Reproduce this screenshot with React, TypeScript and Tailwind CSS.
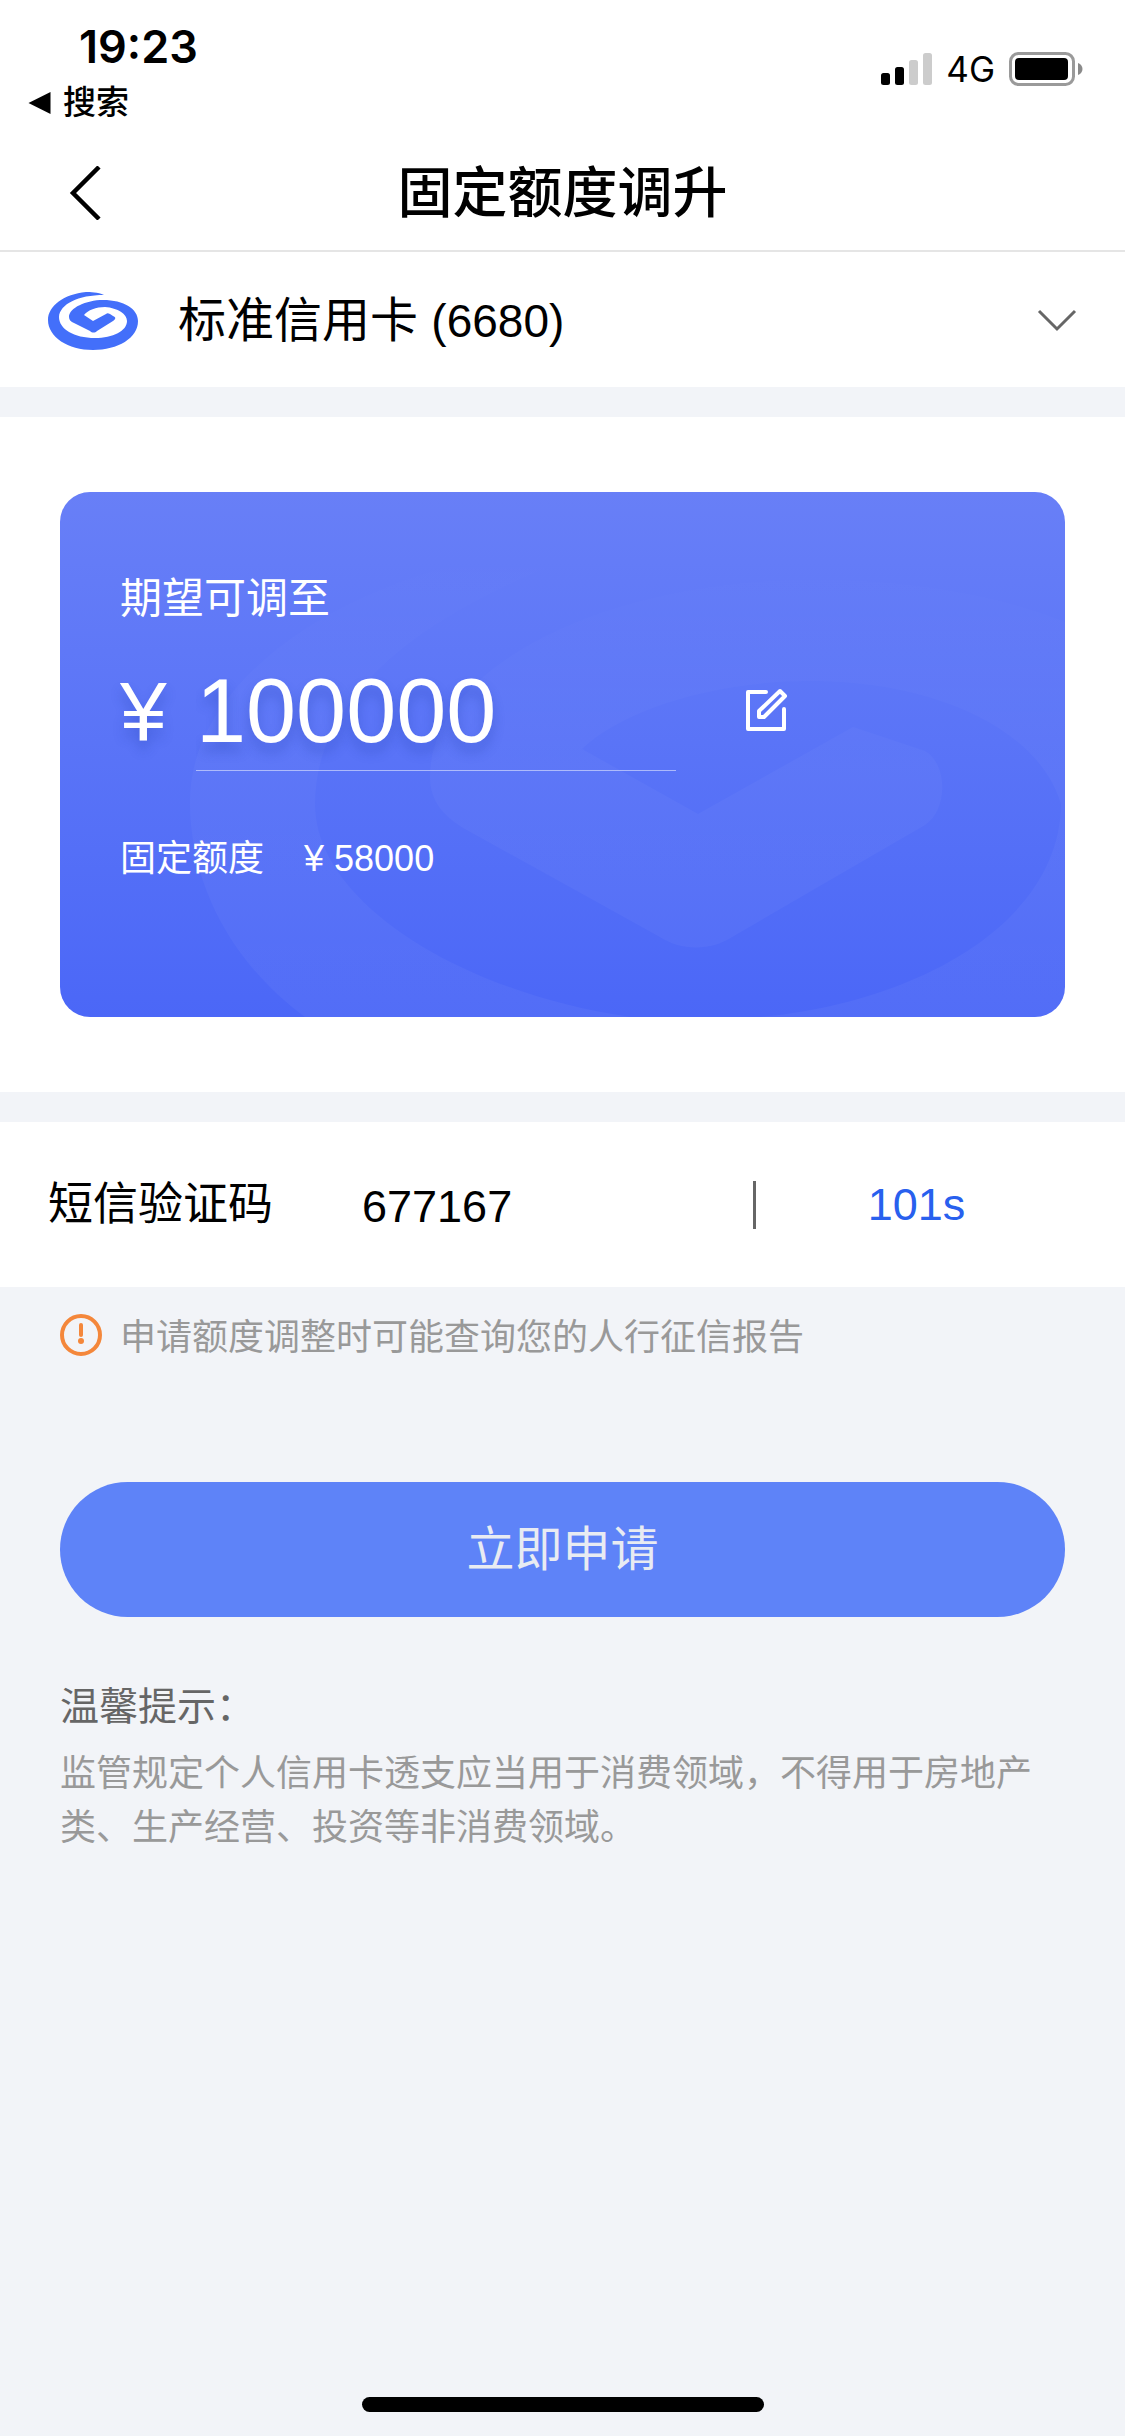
import { useState } from "react";

const BODY_FONT = "font-['Liberation_Sans','Noto_Sans_CJK_SC',sans-serif]";

function BankLogo({ className }: { className?: string }) {
  return (
    <svg viewBox="0 0 90 58" className={className} fill="none" aria-hidden="true">
      <path
        d="M56 3C50 0 42 0 38 0C16 2 0 14 0 28C0 45 20 58 45 58C70 58 90 46 90 29C90 17 76 8 55 8C38 8 21 16 21 25C21 28 23 30 26 31L42 39C44 41 47 41 49 39L65 29C68 27 68 25 65 24L62 22C60 21 59 21 58 22L45 29L36 23C40 18 48 15 57 15C70 16 79 22 79 29C79 39 65 46 47 46C26 46 11 37 11 25C12 12 30 3 56 3Z"
        fill="#436ffa"
      />
    </svg>
  );
}

function CardWatermark() {
  return (
    <svg
      viewBox="0 0 1005 525"
      preserveAspectRatio="xMaxYMax slice"
      className="absolute inset-0 w-full h-full"
      aria-hidden="true"
    >
      <defs>
        <linearGradient id="mark" x1="0" y1="0" x2="0" y2="1">
          <stop offset="0" stopColor="#fff" stopOpacity="0" />
          <stop offset="0.5" stopColor="#fff" stopOpacity="0.03" />
          <stop offset="1" stopColor="#fff" stopOpacity="0.04" />
        </linearGradient>
      </defs>
      <path
        fill="url(#mark)"
        fillRule="evenodd"
        d="M0 0M520 50C300 70 130 180 130 310C130 390 170 470 245 525H570C400 500 255 410 255 312C255 200 370 110 560 50ZM1005 130C930 100 830 85 730 88C530 95 370 180 370 285C370 310 385 325 405 337L600 445C622 459 650 459 672 445L865 333C888 318 888 272 865 259L793 235L638 322L522 257C560 220 650 189 750 189C880 189 980 240 1001 312C1000 430 860 510 700 525H1005Z"
      />
    </svg>
  );
}

function StatusBar() {
  return (
    <div className="flex justify-between items-start h-[132px] pl-7 pr-[42px] font-['Inter','Noto_Sans_CJK_SC',sans-serif] text-black">
      <div className="pt-5">
        <div className="pl-[51px] text-[45px] leading-[54px] font-semibold">19:23</div>
        <a href="#search" className="flex items-center gap-3 h-[57px] text-[33px] leading-[57px] font-medium">
          <svg viewBox="0 0 22 22" className="w-[23px] h-[22px]" aria-hidden="true">
            <path d="M0 11L22 0V22Z" fill="#000" />
          </svg>
          搜索
        </a>
      </div>
      <div className="flex items-center pt-[52px]">
        <svg viewBox="0 0 51 32" className="w-[51px] h-8" aria-hidden="true">
          <rect x="0" y="20" width="9" height="12" rx="2.5" fill="#000" />
          <rect x="14" y="14" width="9" height="18" rx="2.5" fill="#000" />
          <rect x="28" y="7" width="9" height="25" rx="2.5" fill="#ccc" />
          <rect x="42" y="0" width="9" height="32" rx="2.5" fill="#ccc" />
        </svg>
        <span className="ml-3.5 text-[35px] leading-[34px]">4G</span>
        <svg viewBox="0 0 74 34" className="ml-3.5 w-[74px] h-[34px]" aria-hidden="true">
          <rect x="1.5" y="1.5" width="63" height="31" rx="8" fill="none" stroke="#9a9a9a" strokeWidth="3" />
          <rect x="6" y="6" width="53" height="22" rx="4" fill="#000" />
          <path d="M69 11C75 13 75 21 69 23Z" fill="#8a8a8a" />
        </svg>
      </div>
    </div>
  );
}

export default function App() {
  const [amount, setAmount] = useState("100000");
  const [code, setCode] = useState("677167");

  return (
    <div className={`relative min-h-screen bg-[#f2f4f8] text-black ${BODY_FONT}`} lang="zh-CN">
      {/* Header */}
      <header className="bg-white border-b-2 border-[#e5e5e5]">
        <StatusBar />
        <div className="grid grid-cols-[120px_1fr_120px] items-center h-[118px] pt-1">
          <button type="button" aria-label="返回" className="pl-[69px]">
            <svg viewBox="0 0 32 54" className="w-8 h-[54px]" fill="none" stroke="#000" strokeWidth="4.5" aria-hidden="true">
              <path d="M30 1L4 27L30 53" />
            </svg>
          </button>
          <h1 className="text-center text-[55px] leading-[72px] font-medium">固定额度调升</h1>
        </div>
      </header>

      {/* Card picker */}
      <button type="button" className="flex items-center w-full h-[135px] px-12 pt-0.5 bg-white text-left">
        <BankLogo className="w-[90px] h-[58px]" />
        <span className="ml-10 flex-1 text-[48px] leading-[72px]">
          标准信用卡 <span className="text-[46px]">(6680)</span>
        </span>
        <svg viewBox="0 0 40 24" className="w-10 h-6" fill="none" stroke="#666" strokeWidth="3" aria-hidden="true">
          <path d="M2 2L20 20L38 2" />
        </svg>
      </button>

      {/* Credit limit */}
      <section className="mt-[30px] bg-white px-[60px] py-[75px]">
        <div className="relative h-[525px] overflow-hidden rounded-[30px] bg-linear-to-b from-[#687ff7] to-[#4b67f7] text-white">
          <CardWatermark />
          <div className="relative px-[60px] pt-[77px]">
            <label htmlFor="amount" className="block text-[42px] leading-[60px]">期望可调至</label>
            <div className="flex items-center mt-[22px]">
              <span className="w-[76px] text-[84px] leading-[120px] text-shadow-[0_9px_12px_rgb(30_60_170/0.3)]">¥</span>
              <input
                id="amount"
                inputMode="numeric"
                value={amount}
                onChange={(e) => setAmount(e.target.value)}
                className="w-[480px] h-[120px] pt-0.5 border-b border-white/50 text-[90px] outline-none text-shadow-[0_9px_12px_rgb(30_60_170/0.3)]"
              />
              <button type="button" aria-label="编辑额度" className="ml-[69px]">
                <svg viewBox="0 0 44 46" className="w-11 h-[46px]" fill="none" stroke="#fff" strokeWidth="4" strokeLinejoin="round" strokeLinecap="round" aria-hidden="true">
                  <path d="M21 4H3V41H39V21" />
                  <path d="M35 3L40 8L19 29H14V23Z" />
                </svg>
              </button>
            </div>
            <p className="flex gap-10 mt-[60px] text-[36px] leading-[56px]">
              <span>固定额度</span>
              <span>¥ 58000</span>
            </p>
          </div>
        </div>
      </section>

      {/* SMS code */}
      <section className="flex items-center mt-[30px] h-[165px] px-12 bg-white text-[45px] leading-[60px]">
        <label htmlFor="code" className="w-[314px] shrink-0">短信验证码</label>
        <input
          id="code"
          inputMode="numeric"
          value={code}
          onChange={(e) => setCode(e.target.value)}
          className="flex-1 min-w-0 pt-1 outline-none"
        />
        <div className="w-[324px] border-l-3 border-[#666] h-12 flex items-center justify-center text-[#2860ee]">101s</div>
      </section>

      <main className="px-[60px]">
        <p className="flex items-center gap-[18px] h-24 text-[36px] leading-[54px] text-[#999]">
          <svg viewBox="0 0 42 42" className="w-[42px] h-[42px]" fill="none" stroke="#f4873b" strokeWidth="4" aria-hidden="true">
            <circle cx="21" cy="21" r="19" />
            <path d="M21 11V21" strokeLinecap="round" strokeWidth="4" />
            <circle cx="21" cy="27" r="3" fill="#f4873b" stroke="none" />
          </svg>
          <span className="pt-1.5">申请额度调整时可能查询您的人行征信报告</span>
        </p>

        <button type="button" className="mt-[99px] w-full h-[135px] rounded-full bg-[#5e83f8] text-[48px] text-[#e8ebf2]">
          立即申请
        </button>

        <h2 className="mt-[60px] text-[39px] leading-[60px] text-[#666]">温馨提示：</h2>
        <p className="mt-2.5 text-[36px] leading-[54px] text-[#999]">
          监管规定个人信用卡透支应当用于消费领域，不得用于房地产类、生产经营、投资等非消费领域。
        </p>
      </main>

      {/* Home indicator */}
      <div className="absolute bottom-6 left-1/2 -translate-x-1/2 w-[402px] h-[15px] rounded-full bg-black" />
    </div>
  );
}
